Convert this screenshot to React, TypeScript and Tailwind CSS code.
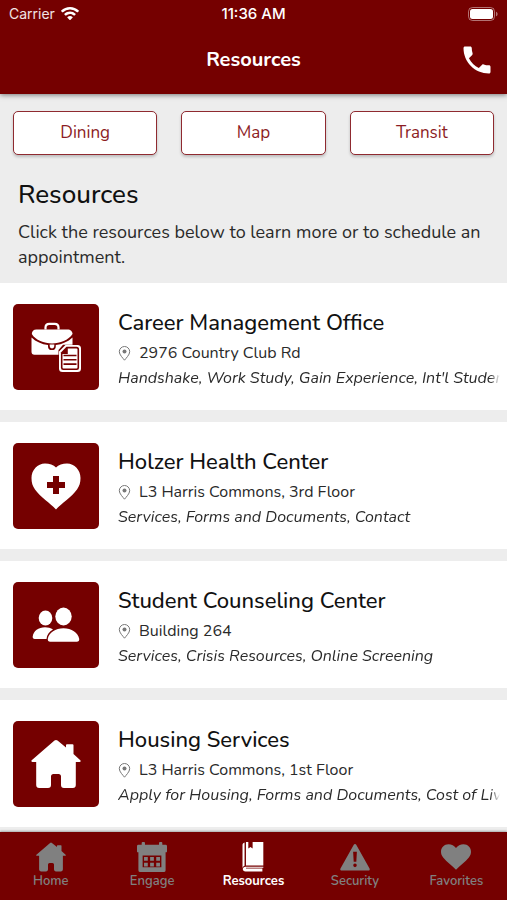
import React from 'react';
import { MdPhone } from 'react-icons/md';

type IconProps = { className?: string };

function WifiIcon({ className }: IconProps) {
  return (
    <svg viewBox="0 0 18 14" className={className} fill="currentColor" aria-hidden="true">
      <path d="M9 0C5.600 0 2.500 1.300.2 3.500a.5.500 0 0 0 0 .7l1.100 1.100c.2.2.5.200.7 0A10 10 0 0 1 9 2.600a10 10 0 0 1 7 2.700c.2.200.5.200.7 0l1.100-1.100a.5.500 0 0 0 0-.7A12.700 12.700 0 0 0 9 0Z" />
      <path d="M9 4.600c-2.100 0-4.100.8-5.600 2.200a.5.500 0 0 0 0 .7l1.100 1.100c.2.200.5.200.7 0A5.600 5.600 0 0 1 9 7.100c1.400 0 2.800.6 3.800 1.500.2.200.5.200.7 0l1.100-1.100a.5.500 0 0 0 0-.7A8.200 8.200 0 0 0 9 4.600Z" />
      <path d="M9 9c-.9 0-1.800.3-2.500.9a.5.500 0 0 0 0 .8l2.200 2.200c.2.200.4.200.6 0l2.200-2.200a.5.500 0 0 0 0-.8A3.900 3.900 0 0 0 9 9Z" />
    </svg>
  );
}

function BatteryIcon({ className }: IconProps) {
  return (
    <svg viewBox="0 0 30 14" className={className} aria-hidden="true">
      <rect x="0.500" y="0.500" width="26" height="13" rx="4" fill="none" stroke="#fff" strokeOpacity="0.450" />
      <rect x="2" y="2" width="23" height="10" rx="2.500" fill="#fff" />
      <path d="M28 4.700c1 .4 1.600 1.200 1.600 2.300S29 8.900 28 9.300Z" fill="#fff" fillOpacity="0.450" />
    </svg>
  );
}

function PinIcon({ className }: IconProps) {
  return (
    <svg viewBox="0 0 12 15" className={className} fill="none" stroke="currentColor" aria-hidden="true">
      <path d="M6 14.200C4.600 12.300.8 8.800.8 5.700a5.200 5.200 0 0 1 10.400 0c0 3.100-3.800 6.600-5.200 8.500Z" />
      <circle cx="6" cy="5.500" r="2" fill="currentColor" stroke="none" />
    </svg>
  );
}

function BriefcaseIcon({ className }: IconProps) {
  return (
    <svg viewBox="0 0 50 50" className={className} fill="currentColor" aria-hidden="true">
      <path d="M14.500 7.500V5.600c0-2.200 1.600-3.800 3.800-3.800h5.400c2.200 0 3.800 1.600 3.800 3.800v1.900" fill="none" stroke="currentColor" strokeWidth="2.200" />
      <path d="M5.500 7.500h31c3 0 5 2 5 4.500C37.500 18 29 21.500 21 21.500S4.500 18 .8 12c0-2.500 1.700-4.500 4.700-4.500Z" />
      <path d="M.5 15.500c4.500 4.300 10.300 6.800 16.500 7.500v1.200a3.900 3.900 0 0 0 7.800 0V23c6.200-.7 12.200-3.200 16.700-7.500v7.200h-9.500L27.500 28v4.800h-24a3 3 0 0 1-3-3Z" />
      <path d="M18.700 22.500h4.600v1.600a2.300 2.300 0 0 1-4.600 0Z" />
      <path d="M34.500 23h12a3.500 3.500 0 0 1 3.500 3.500v20a3.500 3.500 0 0 1-3.500 3.500h-15a3.500 3.500 0 0 1-3.500-3.500v-17Z" />
      <path d="M35.500 24.800h10a2.600 2.600 0 0 1 2.600 2.600v18.400a2.300 2.300 0 0 1-2.300 2.300H32.200a2.300 2.300 0 0 1-2.300-2.300V30.400Z" fill="#750000" />
      <path d="M36.800 26.500h8.700a1 1 0 0 1 1 1v18a1 1 0 0 1-1 1h-13a1 1 0 0 1-1-1V32h5.300Z" />
      <path d="M32.500 33.500h13M32.500 37.800h13M32.500 42.100h13" fill="none" stroke="#750000" strokeWidth="1.600" />
    </svg>
  );
}

function HeartPlusIcon({ className }: IconProps) {
  return (
    <svg viewBox="0 0 50 50" className={className} fill="currentColor" aria-hidden="true">
      <path d="M25 48.500C19 42 9.500 36 4 28.500 1.500 25 .5 21.500.500 17 .5 9 6.500 2.500 14 2.500c4.500 0 8.500 1.500 11 4 2.500-2.500 6.500-4 11-4C43.500 2.500 49.500 9 49.500 17c0 4.500-1 8-3.500 11.500C40.500 36 31 42 25 48.500Z" />
      <path d="M22 15h6v6h6v6h-6v6h-6v-6h-6v-6h6Z" fill="#750000" />
    </svg>
  );
}

function PeopleIcon({ className }: IconProps) {
  return (
    <svg viewBox="0 0 50 50" className={className} fill="currentColor" aria-hidden="true">
      <ellipse cx="14.500" cy="18" rx="6.800" ry="7.500" />
      <path d="M22 29.500c-2.300-1.500-5-2.200-8-2.200C7.500 27.300 2.500 31 1.700 36.500c-.2 1.500.6 2.500 2 2.500H15.500c.3-4 2.800-7.400 6.500-9.500Z" />
      <ellipse cx="32.500" cy="16.500" rx="8.200" ry="8.900" />
      <path d="M32.500 28.300c8 0 14.500 4.200 15.700 10.400.3 1.700-.7 3-2.400 3H19.200c-1.700 0-2.700-1.300-2.400-3 1.200-6.200 7.700-10.400 15.700-10.400Z" />
    </svg>
  );
}

function HouseIcon({ className }: IconProps) {
  return (
    <svg viewBox="0 0 50 50" className={className} fill="currentColor" aria-hidden="true">
      <path d="M23.500 1.600a2.300 2.300 0 0 1 3 0L35 8.500V6.300a1 1 0 0 1 1-1h5.500a1 1 0 0 1 1 1v8.600l6.800 6.300c.8.800.4 1.800-.7 1.800h-3.800v23a3 3 0 0 1-3 3H33a3 3 0 0 1-3-3V37.500a2.500 2.500 0 0 0-2.500-2.500h-5a2.500 2.500 0 0 0-2.500 2.500V46a3 3 0 0 1-3 3H8.200a3 3 0 0 1-3-3V23H1.400C.3 23-.1 22 .7 21.200Z" />
    </svg>
  );
}

function CalendarIcon({ className }: IconProps) {
  return (
    <svg viewBox="0 0 32 32" className={className} fill="currentColor" aria-hidden="true">
      <path d="M5 3V1a1 1 0 0 1 1-1h1.500a1 1 0 0 1 1 1v2h15V1a1 1 0 0 1 1-1H26a1 1 0 0 1 1 1v2h3.500A1.500 1.500 0 0 1 32 4.500V10a1 1 0 0 1-1 1H1a1 1 0 0 1-1-1V4.500A1.500 1.500 0 0 1 1.500 3Z" />
      <path fillRule="evenodd" d="M1.500 10h29v20a2 2 0 0 1-2 2h-25a2 2 0 0 1-2-2ZM6 14.500v12.500h20V14.500Z" />
      <path d="M7.500 16h4v4h-4ZM14 16h4v4h-4ZM20.500 16h4v4h-4ZM7.500 22h4v4h-4ZM14 22h4v4h-4ZM20.500 22h4v4h-4Z" />
    </svg>
  );
}

function BookIcon({ className }: IconProps) {
  return (
    <svg viewBox="0 0 32 32" className={className} fill="currentColor" aria-hidden="true">
      <path d="M7 .500C5.500 1 4.800 2 4.800 3.500v24.200C5.300 26.300 6 25.500 7 25.200Z" />
      <path d="M8.500 0H11v7l2.300-1.800L15.600 7V0H27v25H8.500Z" />
      <path d="M8 26.300h19v1.200H8.500v.8H26v3.200H8c-1.700 0-2.900-1-2.900-2.600S6.300 26.300 8 26.300Z" />
    </svg>
  );
}

function AlertIcon({ className }: IconProps) {
  return (
    <svg viewBox="0 0 32 32" className={className} fill="currentColor" aria-hidden="true">
      <path fillRule="evenodd" d="M14.700 2.800a1.500 1.500 0 0 1 2.600 0l14.200 25.400a1.500 1.500 0 0 1-1.300 2.300h-28.400a1.500 1.500 0 0 1-1.300-2.300ZM14 10.500l.6 10.500h2.800l.6-10.500Zm2 12.500a1.900 1.900 0 1 0 0 3.800 1.900 1.900 0 0 0 0-3.800Z" />
    </svg>
  );
}

function HeartIcon({ className }: IconProps) {
  return (
    <svg viewBox="0 0 32 32" className={className} fill="currentColor" aria-hidden="true">
      <path d="M16 29.500C12 25 6 21.500 2.300 16.500.7 14.300 0 12.500 0 10.300 0 6 3.400 2.500 8 2.500c3.200 0 6.200 1.500 8 4 1.800-2.500 4.800-4 8-4 4.600 0 8 3.500 8 7.800 0 2.200-.7 4-2.300 6.200C26 21.500 20 25 16 29.500Z" />
    </svg>
  );
}

const quickLinks = ['Dining', 'Map', 'Transit'];

const resources = [
  {
    name: 'Career Management Office',
    location: '2976 Country Club Rd',
    topics: "Handshake, Work Study, Gain Experience, Int'l Students",
    icon: BriefcaseIcon,
  },
  {
    name: 'Holzer Health Center',
    location: 'L3 Harris Commons, 3rd Floor',
    topics: 'Services, Forms and Documents, Contact',
    icon: HeartPlusIcon,
  },
  {
    name: 'Student Counseling Center',
    location: 'Building 264',
    topics: 'Services, Crisis Resources, Online Screening',
    icon: PeopleIcon,
  },
  {
    name: 'Housing Services',
    location: 'L3 Harris Commons, 1st Floor',
    topics: 'Apply for Housing, Forms and Documents, Cost of Living',
    icon: HouseIcon,
  },
];

const tabs = [
  { label: 'Home', icon: HouseIcon },
  { label: 'Engage', icon: CalendarIcon },
  { label: 'Resources', icon: BookIcon, active: true },
  { label: 'Security', icon: AlertIcon },
  { label: 'Favorites', icon: HeartIcon },
];

export default function App() {
  return (
    <div className="flex min-h-screen flex-col bg-[#ededed] font-['Nunito','Lato',sans-serif] text-[#111]">
      <header className="relative bg-[#750000] text-white shadow-[0_1px_5px_rgba(0,0,0,0.5)]">
        <div className="grid h-7 grid-cols-3 items-center px-[9px] font-['Inter',sans-serif] text-[15px]">
          <div className="flex items-center gap-1.5 text-sm text-white/90">
            Carrier
            <WifiIcon className="h-3.5 w-[18px] text-white" />
          </div>
          <div className="text-center font-medium">11:36 AM</div>
          <BatteryIcon className="h-3.5 w-[30px] justify-self-end" />
        </div>
        <div className="grid h-[66px] grid-cols-[1fr_auto_1fr] items-center px-3 pb-0.5">
          <h1 className="col-start-2 text-xl font-bold">Resources</h1>
          <button className="justify-self-end" aria-label="Call">
            <MdPhone size={36} />
          </button>
        </div>
      </header>

      <main>
        <div className="grid grid-cols-3 gap-6 px-[13px] pt-[17px]">
          {quickLinks.map(link => (
            <button
              key={link}
              className="h-11 rounded-[5px] border border-[#8f2a30] bg-white text-[17px] text-[#8c1c24] shadow-[0_2px_3px_rgba(0,0,0,0.2)]"
            >
              {link}
            </button>
          ))}
        </div>

        <section className="px-[18px] pt-6 pb-[13px]">
          <h2 className="text-[26px] leading-8 font-medium">Resources</h2>
          <p className="mt-[9px] text-lg leading-[25px] text-[#2a2a2a]">
            Click the resources below to learn more or to schedule an appointment.
          </p>
        </section>

        <ul className="flex flex-col gap-3">
          {resources.map(({ name, location, topics, icon: Icon }) => (
            <li key={name} className="bg-white">
              <a href="#" className="flex gap-[19px] pt-[21px] pr-[7px] pb-[18px] pl-[13px]">
                <span className="flex size-[86px] shrink-0 items-center justify-center rounded-[5px] bg-[#750000] text-white">
                  <Icon className="size-[50px]" />
                </span>
                <span className="flex min-w-0 flex-1 flex-col">
                  <span className="text-[22px] leading-[38px] font-medium">{name}</span>
                  <span className="flex items-center gap-2 text-base leading-[22px] text-[#2a2a2a]">
                    <PinIcon className="h-[15px] w-[13px] text-[#777]" />
                    {location}
                  </span>
                  <span className="overflow-hidden text-base leading-7 whitespace-nowrap text-[#2a2a2a] italic [mask-image:linear-gradient(to_left,transparent,black_10px)]">
                    {topics}
                  </span>
                </span>
              </a>
            </li>
          ))}
        </ul>
      </main>

      <nav className="sticky bottom-0 mt-auto grid h-[68px] grid-cols-5 bg-[#750000] text-[#808080] shadow-[0_-1px_2px_rgba(0,0,0,0.3)]">
        {tabs.map(({ label, icon: Icon, active }) => (
          <a
            key={label}
            href="#"
            aria-current={active ? 'page' : undefined}
            className={`flex flex-col items-center pt-2.5 text-[13px] leading-[18px] ${active ? 'font-bold text-white' : 'font-semibold'}`}
          >
            <Icon className="size-[30px]" />
            {label}
          </a>
        ))}
      </nav>
    </div>
  );
}
